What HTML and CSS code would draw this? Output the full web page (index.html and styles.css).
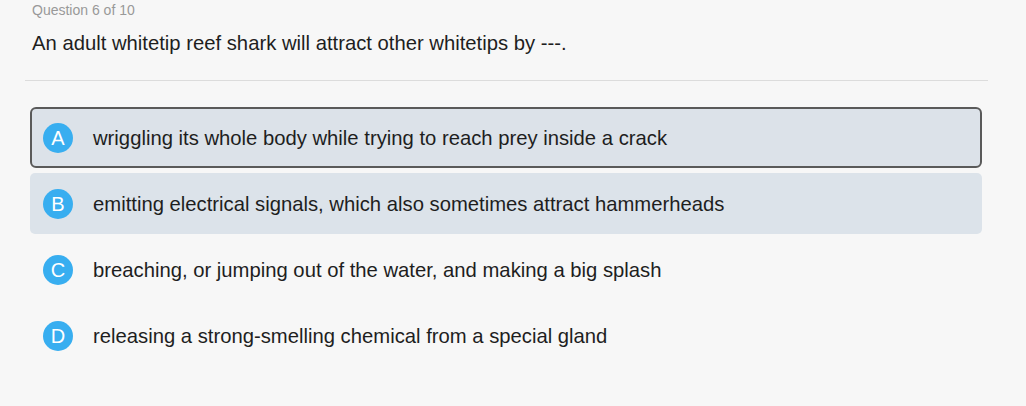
FILE: index.html
```html
<!DOCTYPE html>
<html>
<head>
<meta charset="utf-8">
<link rel="stylesheet" href="styles.css">
</head>
<body>
<div class="quiz">
  <div class="counter">Question 6 of 10</div>
  <div class="question">An adult whitetip reef shark will attract other whitetips by ---.</div>
  <hr class="divider">
  <div class="options">
    <div class="option selected"><span class="badge">A</span><span class="text">wriggling its whole body while trying to reach prey inside a crack</span></div>
    <div class="option hover"><span class="badge">B</span><span class="text">emitting electrical signals, which also sometimes attract hammerheads</span></div>
    <div class="option"><span class="badge">C</span><span class="text">breaching, or jumping out of the water, and making a big splash</span></div>
    <div class="option"><span class="badge">D</span><span class="text">releasing a strong-smelling chemical from a special gland</span></div>
  </div>
</div>
</body>
</html>
```
FILE: styles.css
```css
html, body {
  margin: 0;
  padding: 0;
  background: #f7f7f7;
}
body {
  font-family: "Liberation Sans", Arial, sans-serif;
  color: #1e1e1e;
}
.quiz {
  width: 1026px;
  height: 406px;
}
.counter {
  padding: 2px 0 0 32px;
  font-size: 14px;
  line-height: 16px;
  color: #999;
}
.question {
  padding: 13px 0 0 32px;
  font-size: 20.25px;
  line-height: 24px;
  color: #1e1e1e;
}
.divider {
  margin: 25px 38px 0 25px;
  border: 0;
  border-top: 1px solid #dcdcdc;
  height: 0;
}
.options {
  display: flex;
  flex-direction: column;
  gap: 5px;
  margin: 26px 44px 0 30px;
}
.option {
  display: flex;
  align-items: center;
  height: 61px;
  box-sizing: border-box;
  padding: 0 11px;
  border: 2px solid transparent;
  border-radius: 5px;
}
.option.selected {
  background: #dce2e9;
  border-color: #5a5a5a;
  border-radius: 6px;
}
.option.hover {
  background: #dce3ea;
}
.badge {
  flex: none;
  width: 30px;
  height: 30px;
  border-radius: 50%;
  background: #38aef0;
  color: #fff;
  font-size: 20px;
  line-height: 30px;
  text-align: center;
}
.text {
  margin-left: 20px;
  font-size: 20.25px;
  line-height: 24px;
}
```
